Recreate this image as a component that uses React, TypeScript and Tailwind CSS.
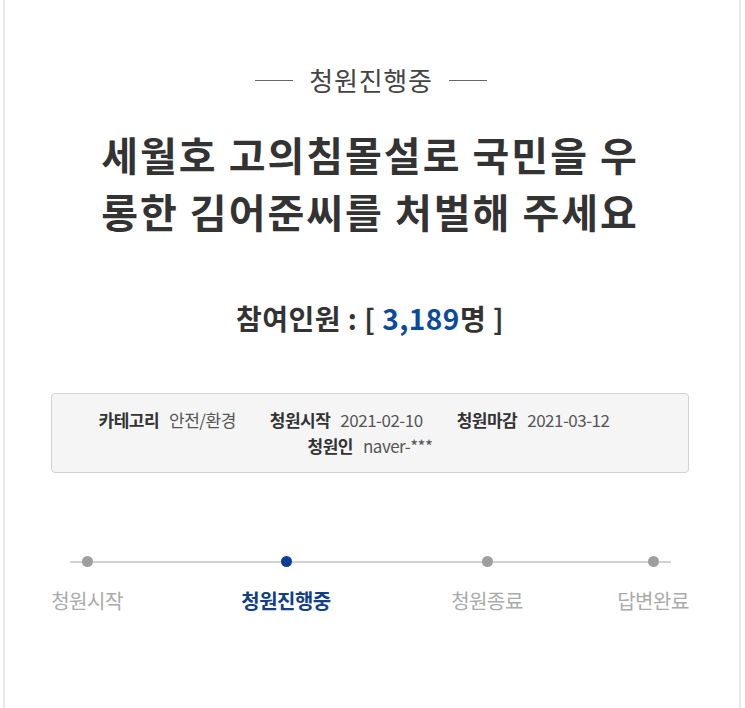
import React from "react";

const font = { fontFamily: '"Noto Sans CJK KR", "Noto Sans", sans-serif' };

export default function App() {
  const steps = [
    { label: "청원시작", active: false },
    { label: "청원진행중", active: true },
    { label: "청원종료", active: false },
    { label: "답변완료", active: false },
  ];
  return (
    <div className="w-[745px] min-h-[708px] bg-white" style={font}>
      <div className="ml-[3px] w-[738px] min-h-[708px] border-x-2 border-[#e8e8e8] flex flex-col items-center pt-[64px]">
        <div className="flex items-center gap-[16px] h-[32px] mr-[2px]">
          <div className="w-[38px] h-px bg-[#666]" />
          <div className="text-[26px] leading-[32px] text-[#444] tracking-[0.8px]">청원진행중</div>
          <div className="w-[38px] h-px bg-[#666]" />
        </div>
        <h1 className="mt-[30px] text-[40px] leading-[57px] font-bold text-[#333] text-center w-[600px] tracking-[2px] mr-[4px]">
          세월호 고의침몰설로 국민을 우<br />롱한 김어준씨를 처벌해 주세요
        </h1>
        <div className="mt-[60px] text-[28px] leading-[36px] font-bold text-[#333] tracking-[0.5px] mr-[4px]">
          참여인원 : [ <span className="text-[#0c4a9e]">3,189</span>명 ]
        </div>
        <div className="mt-[57px] mr-[4px] w-[638px] h-[80px] border border-[#d2d2d2] rounded-[4px] bg-[#f5f5f5] flex flex-col items-center justify-center text-[17px] leading-[26px] tracking-[-0.5px]">
          <div className="flex pr-[32px] gap-[34px]">
            <div className="flex gap-[10px]">
              <span className="font-bold text-[#333]">카테고리</span>
              <span className="text-[#555]">안전/환경</span>
            </div>
            <div className="flex gap-[10px]">
              <span className="font-bold text-[#333]">청원시작</span>
              <span className="text-[#555]">2021-02-10</span>
            </div>
            <div className="flex gap-[10px]">
              <span className="font-bold text-[#333]">청원마감</span>
              <span className="text-[#555]">2021-03-12</span>
            </div>
          </div>
          <div className="flex gap-[10px]">
            <span className="font-bold text-[#333]">청원인</span>
            <span className="text-[#555]">naver-***</span>
          </div>
        </div>
        <div className="relative mt-[83px] w-[734px]">
          <div className="absolute left-[65px] w-[601px] top-[4.5px] h-[2px] bg-[#d2d2d2]" />
          <div className="relative grid grid-cols-[164px_234px_168px_164px]">
            {steps.map((s) => (
              <div key={s.label} className="flex flex-col items-center">
                <div
                  className={
                    s.active
                      ? "w-[11px] h-[11px] rounded-full bg-[#0a3f93]"
                      : "w-[11px] h-[11px] rounded-full bg-[#9e9e9e]"
                  }
                />
                <div
                  className={
                    s.active
                      ? "mt-[21px] text-[20px] leading-[26px] font-bold text-[#123f86] tracking-[-0.5px] whitespace-nowrap"
                      : "mt-[21px] text-[20px] leading-[26px] text-[#aaa] tracking-[-0.5px] whitespace-nowrap"
                  }
                >
                  {s.label}
                </div>
              </div>
            ))}
          </div>
        </div>
      </div>
    </div>
  );
}
